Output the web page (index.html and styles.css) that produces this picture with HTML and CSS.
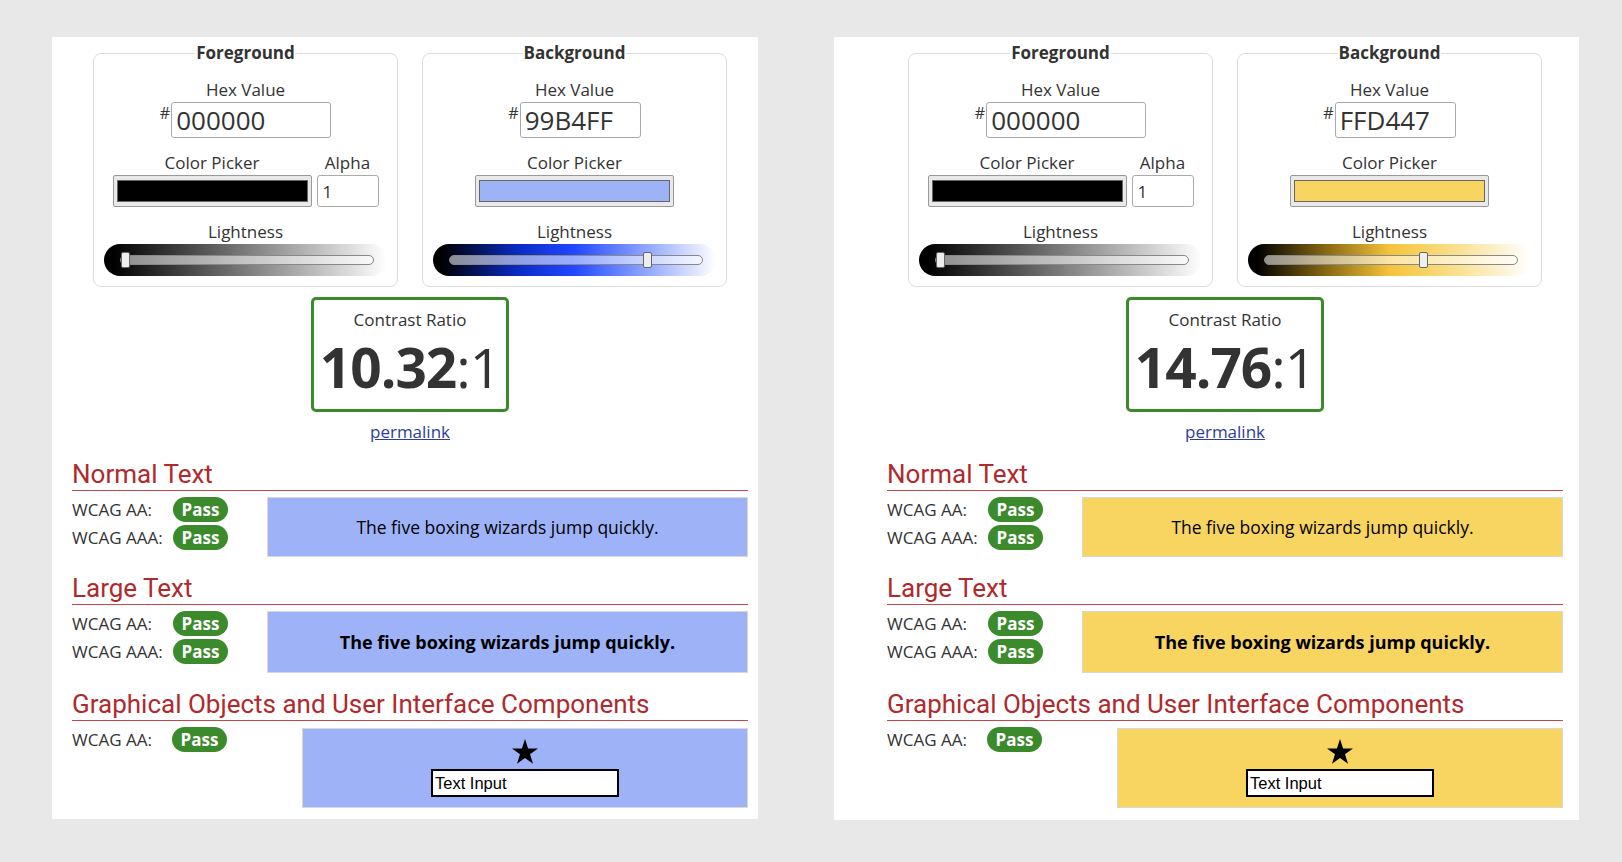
FILE: index.html
```html
<!DOCTYPE html>
<html lang="en">
<head>
<meta charset="utf-8">
<title>Contrast Checker</title>
<link rel="stylesheet" href="styles.css">
</head>
<body>
<div class="page">

  <section class="panel panel-a">
    <div class="pickers">
      <fieldset class="picker">
        <legend>Foreground</legend>
        <div class="field-label">Hex Value</div>
        <div class="hex-row"><span class="hash">#</span><input class="hex-input" type="text" value="000000"></div>
        <div class="picker-row">
          <div class="col">
            <div class="field-label">Color Picker</div>
            <div class="swatch"><div class="swatch-fill fill-black"></div></div>
          </div>
          <div class="col">
            <div class="field-label">Alpha</div>
            <input class="alpha-input" type="text" value="1">
          </div>
        </div>
        <div class="field-label">Lightness</div>
        <div class="slider grad-black"><div class="track"><div class="thumb" style="left:0%"></div></div></div>
      </fieldset>
      <fieldset class="picker">
        <legend>Background</legend>
        <div class="field-label">Hex Value</div>
        <div class="hex-row"><span class="hash">#</span><input class="hex-input hex-short" type="text" value="99B4FF"></div>
        <div class="picker-row">
          <div class="col">
            <div class="field-label">Color Picker</div>
            <div class="swatch"><div class="swatch-fill fill-blue"></div></div>
          </div>
        </div>
        <div class="field-label">Lightness</div>
        <div class="slider grad-blue"><div class="track"><div class="thumb" style="left:80%"></div></div></div>
      </fieldset>
    </div>

    <div class="ratio-box">
      <div class="ratio-label">Contrast Ratio</div>
      <div class="ratio"><b>10.32</b>:1</div>
    </div>
    <a class="permalink" href="#">permalink</a>

    <h2 class="section-title">Normal Text</h2>
    <div class="result">
      <div class="levels">
        <div class="level"><span class="level-name">WCAG AA:</span><span class="pill">Pass</span></div>
        <div class="level"><span class="level-name">WCAG AAA:</span><span class="pill">Pass</span></div>
      </div>
      <div class="sample sample-normal bg-blue">The five boxing wizards jump quickly.</div>
    </div>

    <h2 class="section-title">Large Text</h2>
    <div class="result">
      <div class="levels">
        <div class="level"><span class="level-name">WCAG AA:</span><span class="pill">Pass</span></div>
        <div class="level"><span class="level-name">WCAG AAA:</span><span class="pill">Pass</span></div>
      </div>
      <div class="sample sample-large bg-blue">The five boxing wizards jump quickly.</div>
    </div>

    <h2 class="section-title">Graphical Objects and User Interface Components</h2>
    <div class="result">
      <div class="levels levels-wide">
        <div class="level"><span class="level-name">WCAG AA:</span><span class="pill">Pass</span></div>
      </div>
      <div class="sample sample-ui bg-blue">
        <svg class="star" viewBox="0 0 26 25" width="26" height="25"><polygon points="13,0 16.1,9.4 26,9.5 18,15.3 21,24.8 13,19 5,24.8 8,15.3 0,9.5 9.9,9.4" fill="#000"/></svg>
        <div class="text-input">Text Input</div>
      </div>
    </div>
  </section>

  <section class="panel panel-b">
    <div class="pickers">
      <fieldset class="picker">
        <legend>Foreground</legend>
        <div class="field-label">Hex Value</div>
        <div class="hex-row"><span class="hash">#</span><input class="hex-input" type="text" value="000000"></div>
        <div class="picker-row">
          <div class="col">
            <div class="field-label">Color Picker</div>
            <div class="swatch"><div class="swatch-fill fill-black"></div></div>
          </div>
          <div class="col">
            <div class="field-label">Alpha</div>
            <input class="alpha-input" type="text" value="1">
          </div>
        </div>
        <div class="field-label">Lightness</div>
        <div class="slider grad-black"><div class="track"><div class="thumb" style="left:0%"></div></div></div>
      </fieldset>
      <fieldset class="picker">
        <legend>Background</legend>
        <div class="field-label">Hex Value</div>
        <div class="hex-row"><span class="hash">#</span><input class="hex-input hex-short" type="text" value="FFD447"></div>
        <div class="picker-row">
          <div class="col">
            <div class="field-label">Color Picker</div>
            <div class="swatch"><div class="swatch-fill fill-yellow"></div></div>
          </div>
        </div>
        <div class="field-label">Lightness</div>
        <div class="slider grad-yellow"><div class="track"><div class="thumb" style="left:64%"></div></div></div>
      </fieldset>
    </div>

    <div class="ratio-box">
      <div class="ratio-label">Contrast Ratio</div>
      <div class="ratio"><b>14.76</b>:1</div>
    </div>
    <a class="permalink" href="#">permalink</a>

    <h2 class="section-title">Normal Text</h2>
    <div class="result">
      <div class="levels">
        <div class="level"><span class="level-name">WCAG AA:</span><span class="pill">Pass</span></div>
        <div class="level"><span class="level-name">WCAG AAA:</span><span class="pill">Pass</span></div>
      </div>
      <div class="sample sample-normal bg-yellow">The five boxing wizards jump quickly.</div>
    </div>

    <h2 class="section-title">Large Text</h2>
    <div class="result">
      <div class="levels">
        <div class="level"><span class="level-name">WCAG AA:</span><span class="pill">Pass</span></div>
        <div class="level"><span class="level-name">WCAG AAA:</span><span class="pill">Pass</span></div>
      </div>
      <div class="sample sample-large bg-yellow">The five boxing wizards jump quickly.</div>
    </div>

    <h2 class="section-title">Graphical Objects and User Interface Components</h2>
    <div class="result">
      <div class="levels levels-wide">
        <div class="level"><span class="level-name">WCAG AA:</span><span class="pill">Pass</span></div>
      </div>
      <div class="sample sample-ui bg-yellow">
        <svg class="star" viewBox="0 0 26 25" width="26" height="25"><polygon points="13,0 16.1,9.4 26,9.5 18,15.3 21,24.8 13,19 5,24.8 8,15.3 0,9.5 9.9,9.4" fill="#000"/></svg>
        <div class="text-input">Text Input</div>
      </div>
    </div>
  </section>

</div>
</body>
</html>
```

FILE: styles.css
```css
* { box-sizing: border-box; }

html, body {
  margin: 0;
  padding: 0;
}

body {
  background: #e8e8e8;
  font-family: "Open Sans", "DejaVu Sans", sans-serif;
  color: #333;
  font-size: 17px;
  line-height: 22px;
}

.page {
  display: flex;
  align-items: flex-start;
  gap: 76px;
  padding: 37px 0 0 52px;
}

.panel {
  background: #fff;
  padding-top: 5px;
  display: flex;
  flex-direction: column;
}

.panel-a {
  width: 706px;
  height: 782px;
  padding-left: 20px;
  padding-right: 10px;
}

.panel-b {
  width: 745px;
  height: 783px;
  padding-left: 53px;
  padding-right: 16px;
}

/* ---------- pickers ---------- */
.pickers {
  display: flex;
  justify-content: center;
  gap: 24px;
}

.picker {
  width: 305px;
  margin: 0;
  padding: 15px 0 10px;
  border: 1px solid #dcdcdc;
  border-radius: 8px;
  display: flex;
  flex-direction: column;
  align-items: center;
}

.picker legend {
  font-weight: 700;
  font-size: 17px;
  line-height: 22px;
  padding: 0 1px;
  margin: 0 auto;
  color: #333;
}

.field-label {
  font-size: 17px;
  line-height: 22px;
  text-align: center;
}

.hex-row {
  display: flex;
  align-items: flex-start;
  margin: 1px 0 14px 0;
}

.hash {
  font-size: 16px;
  line-height: 16px;
  margin-top: 3px;
  margin-right: 1px;
}

.hex-input {
  width: 160px;
  height: 36px;
  border: 1px solid #aaa;
  border-radius: 3px;
  font-family: "Open Sans", sans-serif;
  font-size: 26px;
  color: #333;
  padding: 0 0 0 4px;
  margin: 0;
  background: #fff;
}

.hex-short {
  width: 121px;
}

.picker-row {
  display: flex;
  gap: 5px;
  justify-content: center;
  margin-bottom: 14px;
}

.col {
  display: flex;
  flex-direction: column;
  align-items: center;
}

.col .field-label {
  margin-bottom: 1px;
}

.swatch {
  width: 199px;
  height: 32px;
  border: 1px solid #999;
  border-radius: 2px;
  background: #e9e9e9;
  padding: 4px 3px;
}

.swatch-fill {
  width: 100%;
  height: 100%;
  border: 1px solid #666;
}

.fill-black { background: #000; }
.fill-blue { background: #9db3f6; }
.fill-yellow { background: #f7d560; }

.alpha-input {
  width: 62px;
  height: 32px;
  border: 1px solid #aaa;
  border-radius: 3px;
  font-family: "Open Sans", sans-serif;
  font-size: 17px;
  color: #333;
  padding: 0 0 0 5px;
  margin: 0;
}

.slider {
  width: 283px;
  height: 32px;
  margin-top: 1px;
  border-radius: 16px;
  display: flex;
  align-items: center;
  padding: 0 13px 0 16px;
}

.grad-black {
  background: linear-gradient(to right, #000 0%, #000 3%, #fff 100%);
}

.grad-blue {
  background: linear-gradient(to right, #000 0%, #000 3%, #0a2bc4 30%, #2247ff 50%, #6f8bff 68%, #fff 100%);
}

.grad-yellow {
  background: linear-gradient(to right, #000 0%, #000 3%, #8a6a12 28%, #f5c33a 50%, #f9dc7f 70%, #fff 100%);
}

.track {
  position: relative;
  width: 100%;
  height: 10px;
  border: 1px solid #888;
  border-radius: 5px;
  background: rgba(255, 255, 255, 0.55);
}

.thumb {
  position: absolute;
  top: -4px;
  width: 9px;
  height: 16px;
  background: #eee;
  border: 1px solid #666;
  border-radius: 2px;
}

.grad-blue .thumb { transform: translateX(-9px); }
.grad-yellow .thumb { transform: translateX(-7px); }

/* ---------- contrast ratio ---------- */
.ratio-box {
  align-self: center;
  width: 198px;
  height: 115px;
  margin-top: 10px;
  border: 3px solid #3b8a2b;
  border-radius: 5px;
  padding-top: 9px;
  text-align: center;
}

.ratio-label {
  font-size: 17px;
  line-height: 22px;
}

.ratio {
  font-size: 55px;
  line-height: 71px;
  letter-spacing: -1px;
  color: #333;
}

.ratio b {
  font-weight: 700;
}

.permalink {
  align-self: center;
  margin-top: 9px;
  color: #2b3e9a;
  font-size: 17px;
  line-height: 22px;
}

/* ---------- results ---------- */
.section-title {
  margin: 14px 0 0;
  font-family: "Roboto", "Liberation Sans", sans-serif;
  font-weight: 400;
  font-size: 26px;
  line-height: 31px;
  color: #b0292c;
  padding: 2px 0 0;
  border-bottom: 1px solid #c4474a;
}

.result {
  display: flex;
  align-items: flex-start;
  margin-top: 6px;
}

.levels {
  width: 195px;
  flex: none;
}

.levels-wide {
  width: 230px;
}

.level {
  display: flex;
  align-items: center;
  height: 25px;
  margin-bottom: 3px;
}

.level-name {
  width: 101px;
  font-size: 17px;
  color: #333;
}

.levels-wide .level-name {
  width: 100px;
}

.pill {
  width: 55px;
  height: 25px;
  border-radius: 13px;
  background: #3b8a2b;
  color: #fff;
  font-weight: 700;
  font-size: 17px;
  line-height: 25px;
  text-align: center;
}

.sample {
  flex: 1;
  border: 1px solid #d8d8d8;
  display: flex;
  align-items: center;
  justify-content: center;
  color: #000;
}

.bg-blue { background: #9eb3f7; }
.bg-yellow { background: #f7d560; }

.sample-normal {
  height: 60px;
  font-size: 17.5px;
}

.sample-large {
  height: 62px;
  font-size: 18px;
  font-weight: 700;
}

.sample-ui {
  height: 80px;
  margin-top: 1px;
  flex-direction: column;
  justify-content: flex-start;
  padding-top: 10px;
}

.star {
  display: block;
}

.text-input {
  margin-top: 5px;
  width: 188px;
  height: 28px;
  border: 2px solid #000;
  background: #fff;
  font-family: "Liberation Sans", Arial, sans-serif;
  font-size: 16.5px;
  line-height: 24px;
  padding-left: 2px;
  color: #000;
}
```
